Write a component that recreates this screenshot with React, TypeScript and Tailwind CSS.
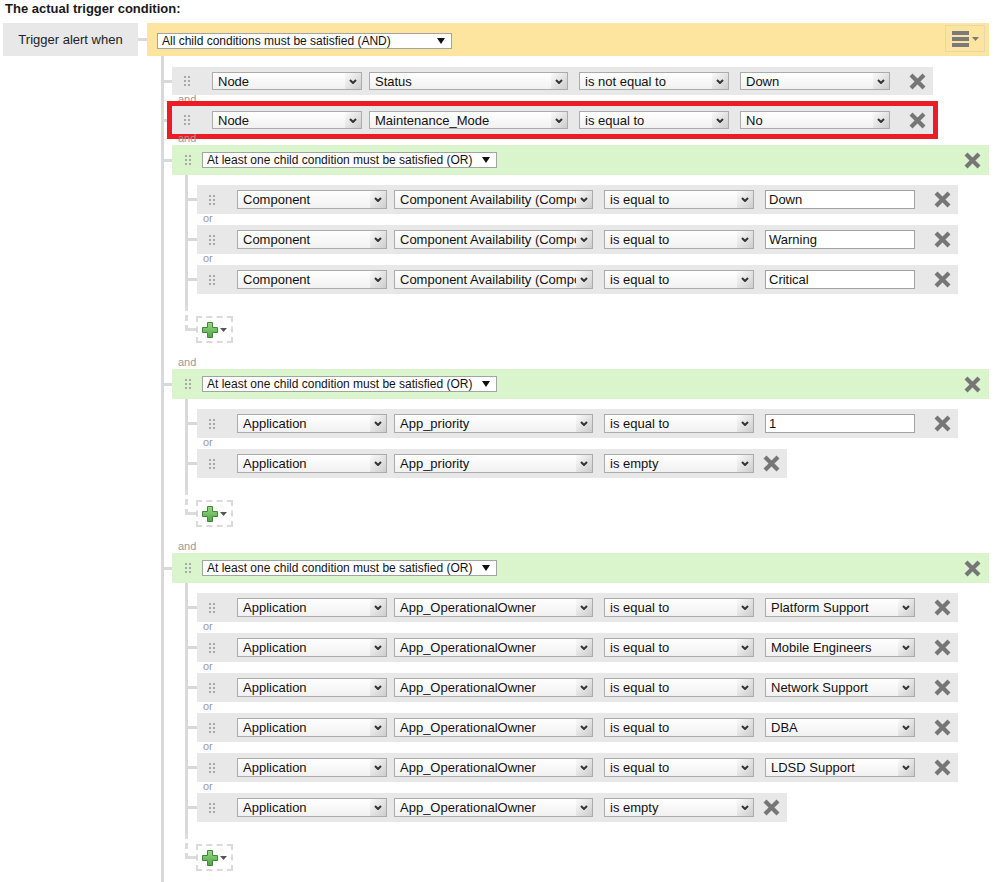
import React from 'react';

type ValueKind = 'select' | 'input' | 'none';

interface Condition {
  entity: string;
  field: string;
  op: string;
  value?: string;
  kind: ValueKind;
}

const topRows: Condition[] = [
  { entity: 'Node', field: 'Status', op: 'is not equal to', value: 'Down', kind: 'select' },
  { entity: 'Node', field: 'Maintenance_Mode', op: 'is equal to', value: 'No', kind: 'select' },
];

const groups: Condition[][] = [
  [
    { entity: 'Component', field: 'Component Availability (Component)', op: 'is equal to', value: 'Down', kind: 'input' },
    { entity: 'Component', field: 'Component Availability (Component)', op: 'is equal to', value: 'Warning', kind: 'input' },
    { entity: 'Component', field: 'Component Availability (Component)', op: 'is equal to', value: 'Critical', kind: 'input' },
  ],
  [
    { entity: 'Application', field: 'App_priority', op: 'is equal to', value: '1', kind: 'input' },
    { entity: 'Application', field: 'App_priority', op: 'is empty', kind: 'none' },
  ],
  [
    { entity: 'Application', field: 'App_OperationalOwner', op: 'is equal to', value: 'Platform Support', kind: 'select' },
    { entity: 'Application', field: 'App_OperationalOwner', op: 'is equal to', value: 'Mobile Engineers', kind: 'select' },
    { entity: 'Application', field: 'App_OperationalOwner', op: 'is equal to', value: 'Network Support', kind: 'select' },
    { entity: 'Application', field: 'App_OperationalOwner', op: 'is equal to', value: 'DBA', kind: 'select' },
    { entity: 'Application', field: 'App_OperationalOwner', op: 'is equal to', value: 'LDSD Support', kind: 'select' },
    { entity: 'Application', field: 'App_OperationalOwner', op: 'is empty', kind: 'none' },
  ],
];

function Grip() {
  return (
    <div className="grid grid-cols-2 gap-[2px] w-[6px] shrink-0">
      {[0, 1, 2, 3, 4, 5].map((i) => (
        <span key={i} className="block w-[2px] h-[2px] bg-[#a8a8a8]" />
      ))}
    </div>
  );
}

function CloseIcon() {
  return (
    <svg width="17" height="17" viewBox="0 0 17 17" className="block shrink-0">
      <path d="M3.5 3.5 L13.5 13.5 M13.5 3.5 L3.5 13.5" stroke="#767676" strokeWidth="4.2" strokeLinecap="square" />
    </svg>
  );
}

function Chevron() {
  return (
    <svg width="8" height="5" viewBox="0 0 8 5" className="block">
      <path d="M1 1 L4 4 L7 1" fill="none" stroke="#333" strokeWidth="2" />
    </svg>
  );
}

// styled select with the grey gradient button on the right
function FancySelect({ text, className, small }: { text: string; className: string; small?: boolean }) {
  return (
    <div
      className={`flex shrink-0 border border-[#ababab] bg-linear-to-b from-white to-[#f1f1f1] ${small ? 'h-[18px]' : 'h-[19px]'} ${className}`}
    >
      <span className="flex-1 flex items-center overflow-hidden whitespace-nowrap pl-[5px] text-[13px] leading-[15px] text-[#111]">
        {text}
      </span>
      <span className="w-[16px] h-full flex items-center justify-center bg-linear-to-br from-[#fbfbfb] to-[#cdcdcd]">
        <Chevron />
      </span>
    </div>
  );
}

// plain native looking select used on the group headers
function PlainSelect({ text }: { text: string }) {
  return (
    <div className="flex items-center shrink-0 w-[295px] h-[16px] border border-[#a3a3a3] bg-white">
      <span className="flex-1 pl-[4px] text-[12px] leading-[14px] text-[#111] whitespace-nowrap">{text}</span>
      <svg width="8" height="6" viewBox="0 0 8 6" className="mr-[6px]">
        <path d="M0 0 L8 0 L4 6 Z" fill="#111" />
      </svg>
    </div>
  );
}

function CondRow({ c, top }: { c: Condition; top?: boolean }) {
  return (
    <div className={`flex items-center w-fit bg-[#e8e8e8] pl-[12px] pr-[7px] ${top ? 'h-[28px]' : 'h-[29px]'}`}>
      <Grip />
      <FancySelect text={c.entity} className="ml-[22px] w-[150px]" small={top} />
      <FancySelect text={c.field} className="ml-[7px] w-[199px]" small={top} />
      <FancySelect text={c.op} className="ml-[11px] w-[150px]" small={top} />
      {c.kind === 'select' && <FancySelect text={c.value || ''} className="ml-[11px] w-[150px]" small={top} />}
      {c.kind === 'input' && (
        <div className="ml-[11px] w-[150px] h-[19px] flex items-center border border-[#a2a2a2] bg-white pl-[3px] text-[13px] leading-[15px] text-[#111]">
          {c.value}
        </div>
      )}
      <div className={c.kind === 'none' ? 'ml-[9px]' : 'ml-[19px]'}>
        <CloseIcon />
      </div>
    </div>
  );
}

function JoinLabel({ text, inner }: { text: string; inner?: boolean }) {
  return (
    <div className={`h-[11px] text-[11px] leading-[9px] text-[#999] ${inner ? 'pl-[15px]' : 'pl-[14px]'}`}>{text}</div>
  );
}

function AddButton() {
  return (
    <div className="flex items-start">
      <div className="w-[11px] h-[26px] border-l-[3px] border-b-[3px] border-dashed border-[#dcdcdc]" />
      <div className="mt-[11px] w-[37px] h-[27px] border-2 border-dashed border-[#dadada] flex items-center pl-[4px] gap-[2px]">
        <svg width="16" height="16" viewBox="0 0 16 16">
          <defs>
            <linearGradient id="plusFill" x1="0" y1="0" x2="0" y2="1">
              <stop offset="0" stopColor="#9bd88a" />
              <stop offset="1" stopColor="#4fa443" />
            </linearGradient>
          </defs>
          <path
            d="M5.5 0.5 H10.5 V5.5 H15.5 V10.5 H10.5 V15.5 H5.5 V10.5 H0.5 V5.5 H5.5 Z"
            fill="url(#plusFill)"
            stroke="#3d8a35"
          />
        </svg>
        <svg width="7" height="4" viewBox="0 0 7 4">
          <path d="M0 0 L7 0 L3.5 4 Z" fill="#555" />
        </svg>
      </div>
    </div>
  );
}

function OrGroup({ rows }: { rows: Condition[] }) {
  return (
    <div className="flex flex-col">
      <div className="flex items-center">
        <div className="w-[8px] h-[3px] bg-[#d9d9d9]" />
        <div className="w-[817px] h-[30px] bg-[#daf5cc] flex items-center pl-[13px] pr-[8px]">
          <Grip />
          <div className="ml-[11px]">
            <PlainSelect text="At least one child condition must be satisfied (OR)" />
          </div>
          <div className="ml-auto">
            <CloseIcon />
          </div>
        </div>
      </div>
      <div className="ml-[13px] pl-[8px]">
        <div className="flex flex-col border-l-[3px] border-[#d9d9d9] pt-[10px] pb-[11px]">
          {rows.map((c, i) => (
            <React.Fragment key={i}>
              {i > 0 && <JoinLabel text="or" inner />}
              <div className="flex items-center">
                <div className="w-[9px] h-[3px] bg-[#d9d9d9]" />
                <CondRow c={c} />
              </div>
            </React.Fragment>
          ))}
        </div>
        <AddButton />
      </div>
    </div>
  );
}

export default function App() {
  return (
    <div className="w-full h-[882px] overflow-hidden bg-white font-['Liberation_Sans',Arial,sans-serif] text-[#111]">
      <div className="h-[23px] pl-[5px] pt-[1px] text-[13px] leading-[16px] font-bold text-[#1a1a1a]">
        The actual trigger condition:
      </div>

      <div className="flex items-start">
        <div className="ml-[3px] w-[135px] h-[33px] bg-[#e8e8e8] flex items-center justify-center text-[13px] text-[#222]">
          Trigger alert when
        </div>
        <div className="w-[9px] h-[3px] mt-[15px] bg-[#d9d9d9]" />

        <div className="w-[842px]">
          <div className="h-[33px] bg-[#fde59f] flex items-start pl-[10px] pr-[4px]">
            <div className="mt-[10px] w-[295px] h-[16px] flex items-center border border-[#a3a3a3] bg-white">
              <span className="flex-1 pl-[4px] text-[12px] leading-[14px] whitespace-nowrap">
                All child conditions must be satisfied (AND)
              </span>
              <svg width="8" height="6" viewBox="0 0 8 6" className="mr-[6px]">
                <path d="M0 0 L8 0 L4 6 Z" fill="#111" />
              </svg>
            </div>
            <div className="ml-auto mt-[2px] w-[40px] h-[27px] border border-[#e3d8b2] flex items-center pl-[6px] gap-[3px]">
              <div className="flex flex-col gap-[2px]">
                <span className="block w-[17px] h-[4px] bg-[#7a7a7a]" />
                <span className="block w-[17px] h-[4px] bg-[#7a7a7a]" />
                <span className="block w-[17px] h-[4px] bg-[#7a7a7a]" />
              </div>
              <svg width="7" height="4" viewBox="0 0 7 4">
                <path d="M0 0 L7 0 L3.5 4 Z" fill="#7a7a7a" />
              </svg>
            </div>
          </div>

          <div className="ml-[14px] border-l-[3px] border-[#d9d9d9] pt-[11px] pb-[60px]">
            <div className="flex items-center">
              <div className="w-[8px] h-[3px] bg-[#d9d9d9]" />
              <CondRow c={topRows[0]} top />
            </div>
            <JoinLabel text="and" />
            <div className="flex items-center">
              <div className="w-[8px] h-[3px] bg-[#d9d9d9]" />
              <div className="outline-solid outline-[5px] outline-[#ec1c24]">
                <CondRow c={topRows[1]} top />
              </div>
            </div>
            <JoinLabel text="and" />
            {groups.map((rows, i) => (
              <React.Fragment key={i}>
                {i > 0 && <JoinLabel text="and" />}
                <div className={i < groups.length - 1 ? 'pb-[15px]' : ''}>
                  <OrGroup rows={rows} />
                </div>
              </React.Fragment>
            ))}
          </div>
        </div>
      </div>
    </div>
  );
}
